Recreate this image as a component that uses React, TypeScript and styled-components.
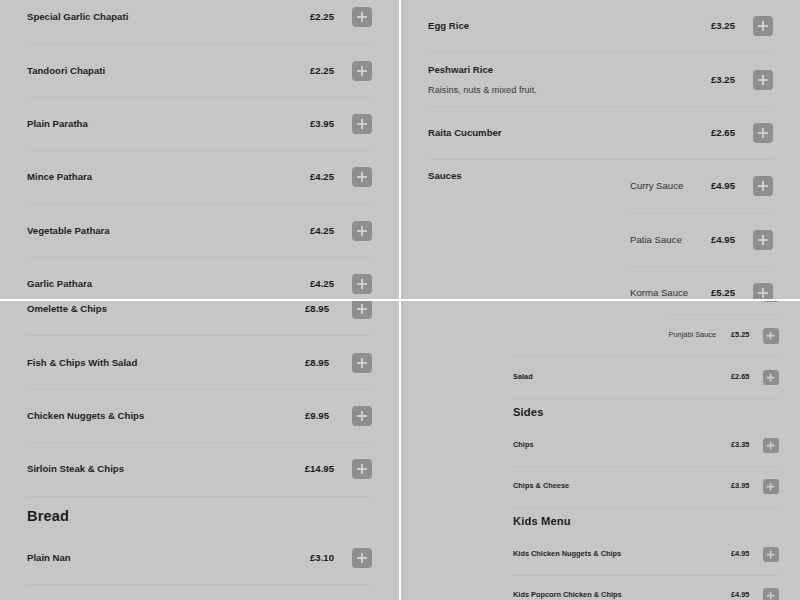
import React from "react";
import styled, { createGlobalStyle } from "styled-components";

const GlobalStyle = createGlobalStyle`
  html, body {
    margin: 0;
    padding: 0;
    background: #ffffff;
  }
  body {
    font-family: "Liberation Sans", Arial, sans-serif;
    color: #1f1f1f;
  }
`;

interface SubItem {
  name: string;
  price: string;
}

interface MenuItem {
  name: string;
  price?: string;
  desc?: string;
  subs?: SubItem[];
}

interface MenuSection {
  title?: string;
  items: MenuItem[];
  priceCol?: number;
}

interface PanelView {
  side: "left" | "right";
  indent: number;
  offset: number;
  zoom?: number;
  sections: MenuSection[];
}

const sauces: SubItem[] = [
  { name: "Curry Sauce", price: "£4.95" },
  { name: "Patia Sauce", price: "£4.95" },
  { name: "Korma Sauce", price: "£5.25" },
  { name: "Punjabi Sauce", price: "£5.25" },
];

// each panel is the same menu seen at a different scroll position
const panels: PanelView[] = [
  {
    side: "left",
    indent: 27,
    offset: -9,
    sections: [
      {
        items: [
          { name: "Special Garlic Chapati", price: "£2.25" },
          { name: "Tandoori Chapati", price: "£2.25" },
          { name: "Plain Paratha", price: "£3.95" },
          { name: "Mince Pathara", price: "£4.25" },
          { name: "Vegetable Pathara", price: "£4.25" },
          { name: "Garlic Pathara", price: "£4.25" },
        ],
      },
    ],
  },
  {
    side: "right",
    indent: 25,
    offset: 0,
    sections: [
      {
        items: [
          { name: "Egg Rice", price: "£3.25" },
          { name: "Peshwari Rice", price: "£3.25", desc: "Raisins, nuts & mixed fruit." },
          { name: "Raita Cucumber", price: "£2.65" },
          { name: "Sauces", subs: sauces },
          { name: "Salad", price: "£2.65" },
        ],
      },
    ],
  },
  {
    side: "left",
    indent: 27,
    offset: -18,
    sections: [
      {
        priceCol: 29,
        items: [
          { name: "Omelette & Chips", price: "£8.95" },
          { name: "Fish & Chips With Salad", price: "£8.95" },
          { name: "Chicken Nuggets & Chips", price: "£9.95" },
          { name: "Sirloin Steak & Chips", price: "£14.95" },
        ],
      },
      {
        title: "Bread",
        items: [
          { name: "Plain Nan", price: "£3.10" },
          { name: "Garlic Nan", price: "£3.30" },
        ],
      },
    ],
  },
  {
    side: "right",
    indent: 110,
    offset: -109,
    zoom: 0.77,
    sections: [
      {
        items: [
          { name: "Sauces", subs: sauces },
          { name: "Salad", price: "£2.65" },
        ],
      },
      {
        title: "Sides",
        items: [
          { name: "Chips", price: "£3.35" },
          { name: "Chips & Cheese", price: "£3.95" },
        ],
      },
      {
        title: "Kids Menu",
        items: [
          { name: "Kids Chicken Nuggets & Chips", price: "£4.95" },
          { name: "Kids Popcorn Chicken & Chips", price: "£4.95" },
        ],
      },
    ],
  },
];

function PlusIcon() {
  return (
    <svg width="12" height="12" viewBox="0 0 12 12" aria-hidden="true">
      <path d="M6 1v10M1 6h10" stroke="#cdcdcd" strokeWidth="2" strokeLinecap="butt" />
    </svg>
  );
}

function AddButton() {
  return (
    <AddBtn type="button" aria-label="Add to order">
      <PlusIcon />
    </AddBtn>
  );
}

function ItemRow({ item, priceCol }: { item: MenuItem; priceCol?: number }) {
  if (item.subs) {
    return (
      <Row $align="start">
        <GroupLabel>{item.name}</GroupLabel>
        <SubList>
          {item.subs.map((sub) => (
            <SubRow key={sub.name}>
              <SubName>{sub.name}</SubName>
              <Price $min={0}>{sub.price}</Price>
              <AddButton />
            </SubRow>
          ))}
        </SubList>
      </Row>
    );
  }
  return (
    <Row>
      <ItemText>
        <ItemName>{item.name}</ItemName>
        {item.desc && <ItemDesc>{item.desc}</ItemDesc>}
      </ItemText>
      <Price $min={priceCol ?? 0}>{item.price}</Price>
      <AddButton />
    </Row>
  );
}

export default function App() {
  return (
    <>
      <GlobalStyle />
      <Board>
        {panels.map((panel, i) => (
          <Cell key={i} $side={panel.side}>
            <Viewport $side={panel.side}>
              <Scroller $indent={panel.indent} $offset={panel.offset}>
                <Content $zoom={panel.zoom ?? 1}>
                  {panel.sections.map((section, j) => (
                    <Section key={j}>
                      {section.title && <SectionTitle>{section.title}</SectionTitle>}
                      {section.items.map((item) => (
                        <ItemRow key={item.name} item={item} priceCol={section.priceCol} />
                      ))}
                    </Section>
                  ))}
                </Content>
              </Scroller>
            </Viewport>
          </Cell>
        ))}
      </Board>
    </>
  );
}

const Board = styled.div`
  width: 800px;
  height: 600px;
  display: grid;
  grid-template-columns: 399px 399px;
  grid-template-rows: 299px 299px;
  gap: 2px;
  background: #ffffff;
`;

const Cell = styled.div<{ $side: "left" | "right" }>`
  display: flex;
  background: #c6c6c6;
  padding: ${(p) => (p.$side === "left" ? "0 3px 0 0" : "0 0 0 1px")};
  overflow: hidden;
`;

const Viewport = styled.div<{ $side: "left" | "right" }>`
  flex: 1;
  overflow: hidden;
  ${(p) => (p.$side === "left" ? "border-right" : "border-left")}: 1px solid #bdbdbd;
`;

const Scroller = styled.div<{ $indent: number; $offset: number }>`
  padding-left: ${(p) => p.$indent}px;
  margin-top: ${(p) => p.$offset}px;
`;

const Content = styled.div<{ $zoom: number }>`
  width: 345px;
  zoom: ${(p) => p.$zoom};
`;

const Section = styled.section`
  display: flex;
  flex-direction: column;
`;

const SectionTitle = styled.h3`
  margin: 0;
  padding: 10px 0 7px;
  font-size: 14.5px;
  line-height: 18px;
  font-weight: 700;
  letter-spacing: 0.2px;
  color: #1c1c1c;
`;

const Row = styled.div<{ $align?: "start" | "center" }>`
  display: flex;
  align-items: ${(p) => (p.$align === "start" ? "flex-start" : "center")};
  box-sizing: border-box;
  min-height: 53.4px;
  border-bottom: 1px solid #bdbdbd;
`;

const ItemText = styled.div`
  flex: 1;
  display: flex;
  flex-direction: column;
  gap: 6px;
`;

const ItemName = styled.span`
  font-size: 9.6px;
  line-height: 14px;
  font-weight: 700;
  color: #1f1f1f;
`;

const ItemDesc = styled.span`
  font-size: 9.2px;
  line-height: 14px;
  font-weight: 400;
  color: #3a3a3a;
`;

const GroupLabel = styled.span`
  flex: 1;
  padding-top: 9px;
  font-size: 9.6px;
  line-height: 14px;
  font-weight: 700;
  color: #1f1f1f;
`;

const SubList = styled.div`
  width: 145px;
  display: flex;
  flex-direction: column;
`;

const SubRow = styled.div`
  display: flex;
  align-items: center;
  box-sizing: border-box;
  min-height: 53.4px;
  border-bottom: 1px solid #bdbdbd;
  &:last-child {
    border-bottom: none;
  }
`;

const SubName = styled.span`
  flex: 1;
  padding-left: 2px;
  font-size: 9.6px;
  line-height: 14px;
  font-weight: 400;
  color: #333333;
`;

const Price = styled.span<{ $min: number }>`
  min-width: ${(p) => p.$min}px;
  font-size: 9.6px;
  line-height: 14px;
  font-weight: 700;
  color: #1a1a1a;
  text-align: left;
`;

const AddBtn = styled.button`
  flex: 0 0 20px;
  width: 20px;
  height: 20px;
  margin-left: 18px;
  padding: 0;
  border: none;
  border-radius: 4px;
  background: #8e8e8e;
  display: flex;
  align-items: center;
  justify-content: center;
  cursor: pointer;
`;
